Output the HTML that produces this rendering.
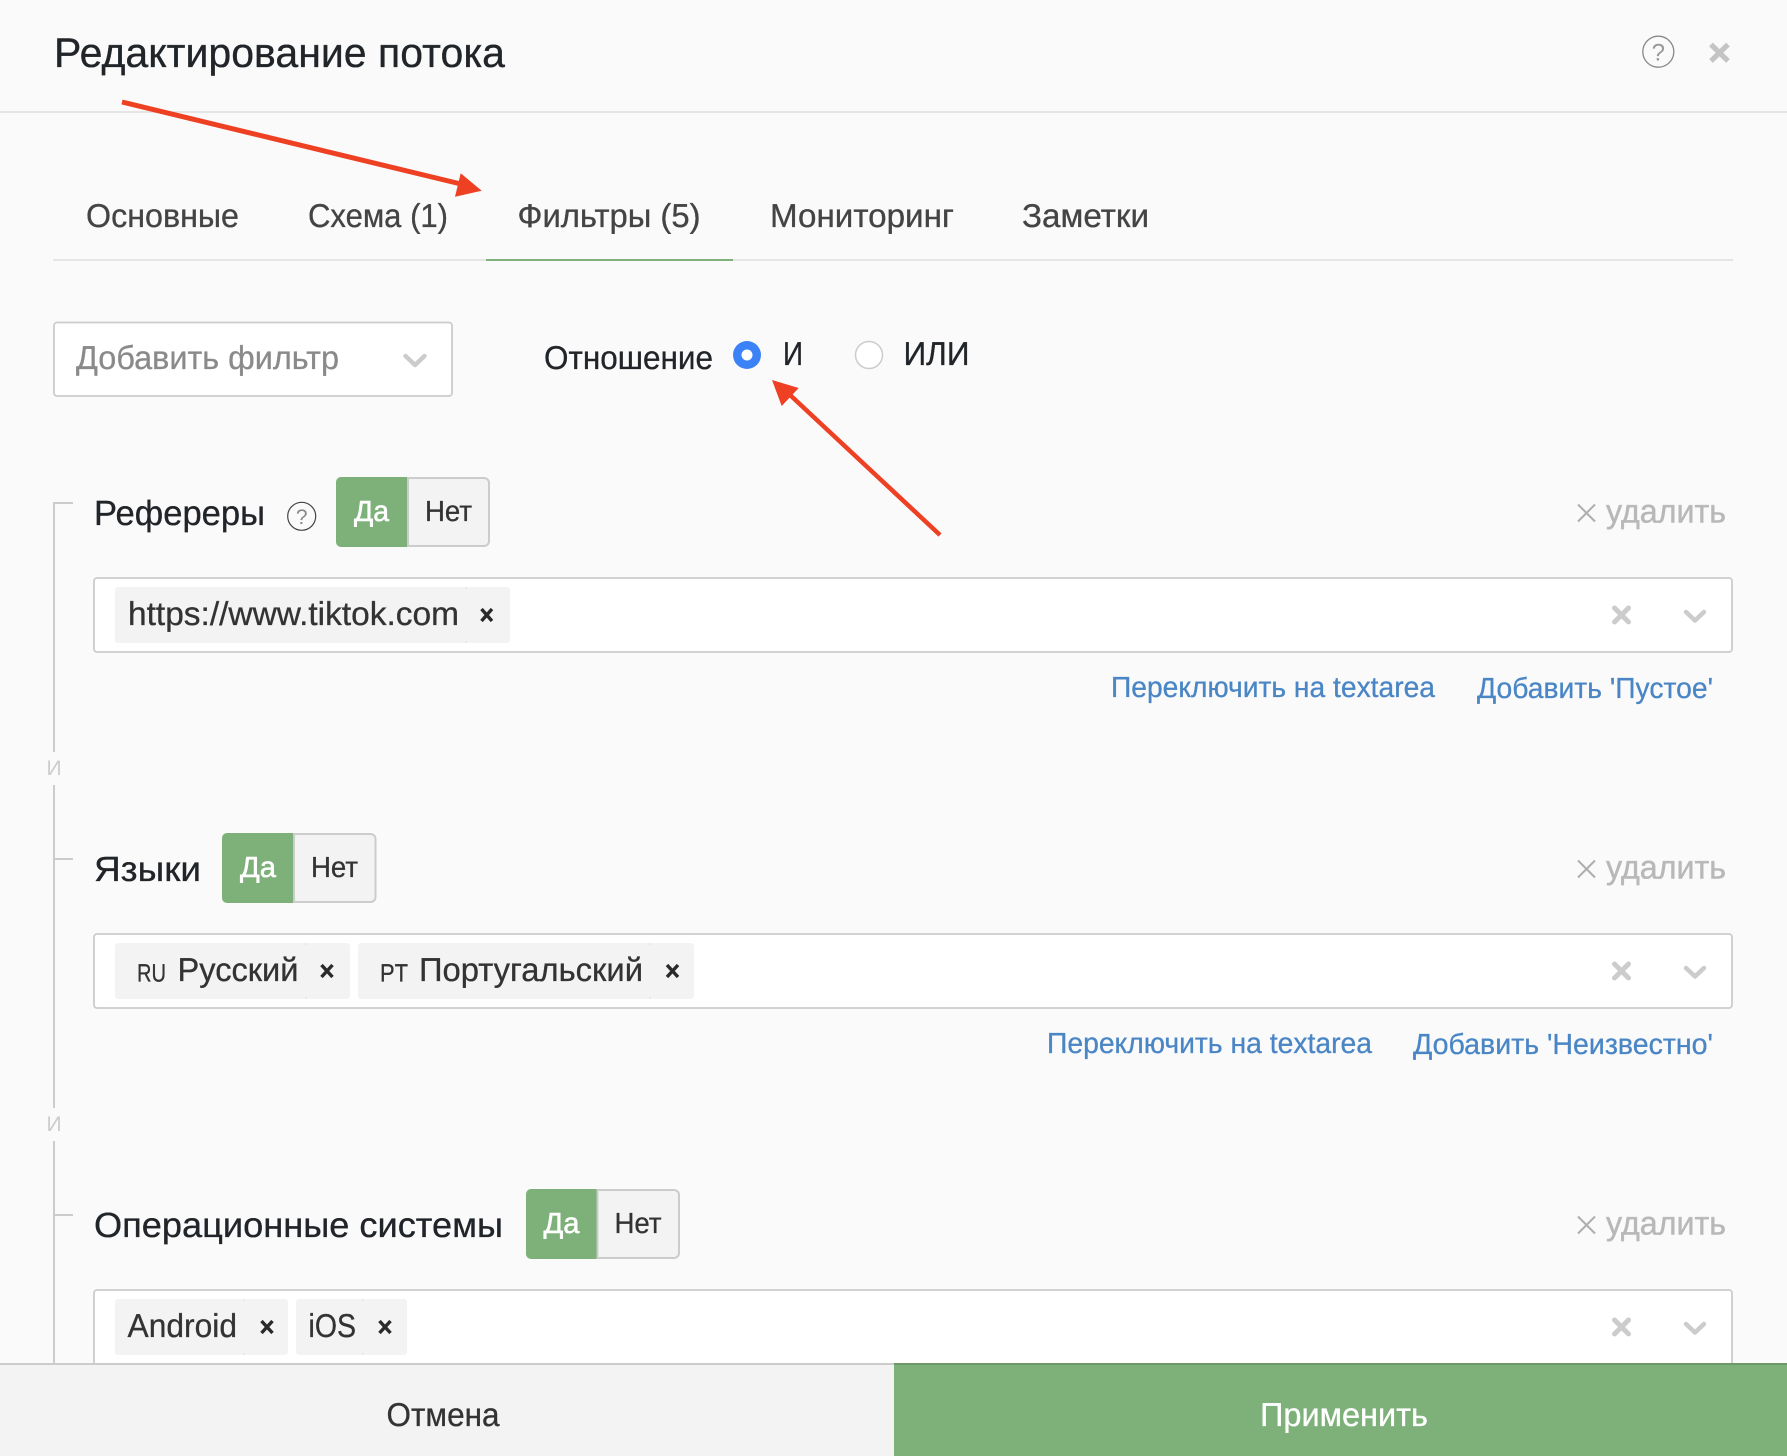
<!DOCTYPE html>
<html lang="ru"><head><meta charset="utf-8"><title>Редактирование потока</title>
<style>
html,body{margin:0;padding:0;background:#fafafa;width:1787px;height:1456px;overflow:hidden}
svg{display:block}
text{font-family:"Liberation Sans",Arial,sans-serif;text-rendering:geometricPrecision;stroke-width:.3px}
.h{font-size:41.5px;fill:#212529;stroke:#212529}
.t{font-size:35px;fill:#212529;stroke:#212529}
.b{font-size:33px;fill:#212529;stroke:#212529}
.ph{font-size:33px;fill:#8a8a8a;stroke:#8a8a8a}
.tab{font-size:33px;fill:#444;stroke:#444}
.yes{font-size:29px;fill:#fff;stroke:#fff;stroke-width:.55px}
.no{font-size:29px;fill:#333;stroke:#333}
.tag{font-size:33px;fill:#333;stroke:#333}
.code{font-size:25px;fill:#333;stroke:#333}
.del{font-size:33px;fill:#b8b8b8;stroke:#b8b8b8;stroke-width:.45px}
.lnk{font-size:29px;fill:#4a86c5;stroke:#4a86c5}
.and{font-size:21px;fill:#ccc;stroke:none}
.ft{font-size:33px;fill:#333;stroke:#333}
.ap{font-size:33px;fill:#fff;stroke:#fff}
.q{stroke:none}
.line{stroke:#ccc;stroke-width:2;fill:none}
.xs{stroke:#ccc;stroke-width:5;fill:none;stroke-linecap:round}
.chev{stroke:#ccc;stroke-width:4.5;fill:none;stroke-linecap:round;stroke-linejoin:round}
.tx{stroke:#2a2a2a;stroke-width:3.4;fill:none}
.dx{stroke:#aeaeae;stroke-width:2;fill:none}
.tagbg{fill:#f3f3f3}
.tick{stroke:#e6e6e6;stroke-width:1.5}
</style></head>
<body>
<svg xmlns="http://www.w3.org/2000/svg" width="1787" height="1456" viewBox="0 0 1787 1456">
<rect width="1787" height="1456" fill="#fafafa"/>

<!-- header -->
<text class="h" x="54" y="67" textLength="451" lengthAdjust="spacingAndGlyphs">Редактирование потока</text>
<circle cx="1658.300" cy="51.700" r="15.500" fill="none" stroke="#888" stroke-width="1.300"/>
<text class="q" x="1658.300" y="60.500" font-size="24" fill="#999" text-anchor="middle">?</text>
<path d="M1711 44.500L1728 61M1728 44.500L1711 61" stroke="#c4c4c4" stroke-width="5.200" fill="none"/>
<rect x="0" y="111" width="1787" height="2" fill="#e5e5e5"/>

<!-- tabs -->
<text class="tab" x="86" y="227" textLength="153" lengthAdjust="spacingAndGlyphs">Основные</text>
<text class="tab" x="308" y="227" textLength="140" lengthAdjust="spacingAndGlyphs">Схема (1)</text>
<text class="tab" x="517.500" y="227" textLength="183" lengthAdjust="spacingAndGlyphs">Фильтры (5)</text>
<text class="tab" x="770" y="227" textLength="184" lengthAdjust="spacingAndGlyphs">Мониторинг</text>
<text class="tab" x="1022" y="227" textLength="127" lengthAdjust="spacingAndGlyphs">Заметки</text>
<rect x="53" y="259" width="1680" height="2" fill="#e5e5e5"/>
<rect x="486" y="259" width="247" height="2" fill="#7db179"/>

<!-- add filter -->
<rect x="54" y="322.500" width="398" height="73.500" rx="3" fill="#fff" stroke="#ccc" stroke-width="1.800"/>
<text class="ph" x="76" y="369" textLength="263" lengthAdjust="spacingAndGlyphs">Добавить фильтр</text>
<path d="M405.500 356L415 365L424.500 356" class="chev"/>
<text class="b" x="544" y="369" textLength="169" lengthAdjust="spacingAndGlyphs">Отношение</text>
<circle cx="747" cy="355" r="14" fill="#3b82f6"/>
<circle cx="747" cy="355" r="5.500" fill="#fff"/>
<text class="b" x="783" y="365" textLength="20" lengthAdjust="spacingAndGlyphs">И</text>
<circle cx="869" cy="355" r="13.500" fill="#fff" stroke="#ccc" stroke-width="1.500"/>
<text class="b" x="903.500" y="365" textLength="66" lengthAdjust="spacingAndGlyphs">ИЛИ</text>

<!-- bracket -->
<path class="line" d="M73 503H54V752M54 785V1108M54 1141V1364M54 859H73M54 1215H73"/>
<text class="and" x="54" y="775" text-anchor="middle">И</text>
<text class="and" x="54" y="1131" text-anchor="middle">И</text>

<!-- section 1 -->
<text class="t" x="94" y="525" textLength="171" lengthAdjust="spacingAndGlyphs">Рефереры</text>
<circle cx="301.700" cy="516.300" r="14" fill="none" stroke="#444" stroke-width="1.200"/>
<text class="q" x="301.700" y="524" font-size="21" fill="#888" text-anchor="middle">?</text>
<rect x="337" y="478" width="152" height="68" rx="5" fill="#f3f3f3" stroke="#ccc" stroke-width="2"/>
<path d="M407 477H341a5 5 0 0 0-5 5V542a5 5 0 0 0 5 5H407Z" fill="#7db179"/>
<path d="M408 477V547" stroke="#ccc" stroke-width="2"/>
<text class="yes" x="354" y="521" textLength="35" lengthAdjust="spacingAndGlyphs">Да</text>
<text class="no" x="425" y="521" textLength="47" lengthAdjust="spacingAndGlyphs">Нет</text>
<path class="dx" d="M1578 504.500L1595 521.500M1595 504.500L1578 521.500"/>
<text class="del" x="1606" y="522.500" textLength="120" lengthAdjust="spacingAndGlyphs">удалить</text>
<rect x="94" y="578" width="1638" height="74" rx="3" fill="#fff" stroke="#ccc" stroke-width="1.800"/>
<rect class="tagbg" x="115" y="587" width="395" height="56" rx="3"/>
<path class="tick" d="M466 587v2M466 641v2"/>
<text class="tag" x="128" y="625" textLength="331" lengthAdjust="spacingAndGlyphs">https://www.tiktok.com</text>
<path class="tx" d="M481.500 609L492 621M492 609L481.500 621"/>
<path class="xs" d="M1614.500 608L1628.500 622M1628.500 608L1614.500 622"/>
<path class="chev" d="M1686 612L1695 620.500L1704 612"/>
<text class="lnk" x="1111" y="697" textLength="324" lengthAdjust="spacingAndGlyphs">Переключить на textarea</text>
<text class="lnk" x="1477" y="698" textLength="236" lengthAdjust="spacingAndGlyphs">Добавить 'Пустое'</text>

<!-- section 2 -->
<text class="t" x="94" y="881" textLength="107" lengthAdjust="spacingAndGlyphs">Языки</text>
<rect x="223" y="834" width="152.500" height="68" rx="5" fill="#f3f3f3" stroke="#ccc" stroke-width="2"/>
<path d="M293 833H227a5 5 0 0 0-5 5V898a5 5 0 0 0 5 5H293Z" fill="#7db179"/>
<path d="M294 833V903" stroke="#ccc" stroke-width="2"/>
<text class="yes" x="240" y="877" textLength="36" lengthAdjust="spacingAndGlyphs">Да</text>
<text class="no" x="311" y="877" textLength="47" lengthAdjust="spacingAndGlyphs">Нет</text>
<path class="dx" d="M1578 860.500L1595 877.500M1595 860.500L1578 877.500"/>
<text class="del" x="1606" y="878.500" textLength="120" lengthAdjust="spacingAndGlyphs">удалить</text>
<rect x="94" y="934" width="1638" height="74" rx="3" fill="#fff" stroke="#ccc" stroke-width="1.800"/>
<rect class="tagbg" x="115" y="943" width="235" height="56" rx="3"/>
<path class="tick" d="M306 943v2M306 997v2"/>
<text class="code" x="137" y="981.500" textLength="29" lengthAdjust="spacingAndGlyphs">RU</text>
<text class="tag" x="177.500" y="981" textLength="121" lengthAdjust="spacingAndGlyphs">Русский</text>
<path class="tx" d="M321.500 965L332.500 977M332.500 965L321.500 977"/>
<rect class="tagbg" x="358" y="943" width="336" height="56" rx="3"/>
<path class="tick" d="M650 943v2M650 997v2"/>
<text class="code" x="380" y="981.500" textLength="28" lengthAdjust="spacingAndGlyphs">PT</text>
<text class="tag" x="419" y="981" textLength="224" lengthAdjust="spacingAndGlyphs">Португальский</text>
<path class="tx" d="M667 965L678 977M678 965L667 977"/>
<path class="xs" d="M1614.500 964L1628.500 978M1628.500 964L1614.500 978"/>
<path class="chev" d="M1686 968L1695 976.500L1704 968"/>
<text class="lnk" x="1047" y="1053" textLength="325" lengthAdjust="spacingAndGlyphs">Переключить на textarea</text>
<text class="lnk" x="1413" y="1054" textLength="300" lengthAdjust="spacingAndGlyphs">Добавить 'Неизвестно'</text>

<!-- section 3 -->
<text class="t" x="94" y="1237" textLength="409" lengthAdjust="spacingAndGlyphs">Операционные системы</text>
<rect x="527" y="1190" width="152" height="68" rx="5" fill="#f3f3f3" stroke="#ccc" stroke-width="2"/>
<path d="M596.500 1189H531a5 5 0 0 0-5 5V1254a5 5 0 0 0 5 5H596.500Z" fill="#7db179"/>
<path d="M597.500 1189V1259" stroke="#ccc" stroke-width="2"/>
<text class="yes" x="543.500" y="1233" textLength="36" lengthAdjust="spacingAndGlyphs">Да</text>
<text class="no" x="614.500" y="1233" textLength="47" lengthAdjust="spacingAndGlyphs">Нет</text>
<path class="dx" d="M1578 1216.500L1595 1233.500M1595 1216.500L1578 1233.500"/>
<text class="del" x="1606" y="1234.500" textLength="120" lengthAdjust="spacingAndGlyphs">удалить</text>
<rect x="94" y="1290" width="1638" height="100" rx="3" fill="#fff" stroke="#ccc" stroke-width="1.800"/>
<rect class="tagbg" x="115" y="1299" width="173" height="56" rx="3"/>
<path class="tick" d="M244 1299v2M244 1353v2"/>
<text class="tag" x="127.500" y="1337" textLength="109.500" lengthAdjust="spacingAndGlyphs">Android</text>
<path class="tx" d="M261.500 1321L272.500 1333M272.500 1321L261.500 1333"/>
<rect class="tagbg" x="296" y="1299" width="111" height="56" rx="3"/>
<path class="tick" d="M363 1299v2M363 1353v2"/>
<text class="tag" x="308.500" y="1337" textLength="47.500" lengthAdjust="spacingAndGlyphs">iOS</text>
<path class="tx" d="M379.500 1321L390.500 1333M390.500 1321L379.500 1333"/>
<path class="xs" d="M1614.500 1320L1628.500 1334M1628.500 1320L1614.500 1334"/>
<path class="chev" d="M1686 1324L1695 1332.500L1704 1324"/>

<!-- footer -->
<rect x="0" y="1363" width="894" height="93" fill="#f3f3f3"/>
<rect x="0" y="1363" width="894" height="2" fill="#ccc"/>
<rect x="894" y="1363" width="893" height="93" fill="#7db179"/>
<rect x="894" y="1363" width="893" height="2" fill="#6b9a68"/>
<text class="ft" x="386.500" y="1426" textLength="113" lengthAdjust="spacingAndGlyphs">Отмена</text>
<text class="ap" x="1260" y="1426" textLength="168" lengthAdjust="spacingAndGlyphs">Применить</text>

<!-- arrows -->
<path d="M122 102L465 185" stroke="#ee4023" stroke-width="5" fill="none"/>
<path d="M481.700 190.700L460.700 173.300L455 196.700Z" fill="#ee4023"/>
<path d="M940 535L789 394" stroke="#ee4023" stroke-width="4.500" fill="none"/>
<path d="M772 380L798.700 388L781.700 406Z" fill="#ee4023"/>
</svg>
</body></html>
